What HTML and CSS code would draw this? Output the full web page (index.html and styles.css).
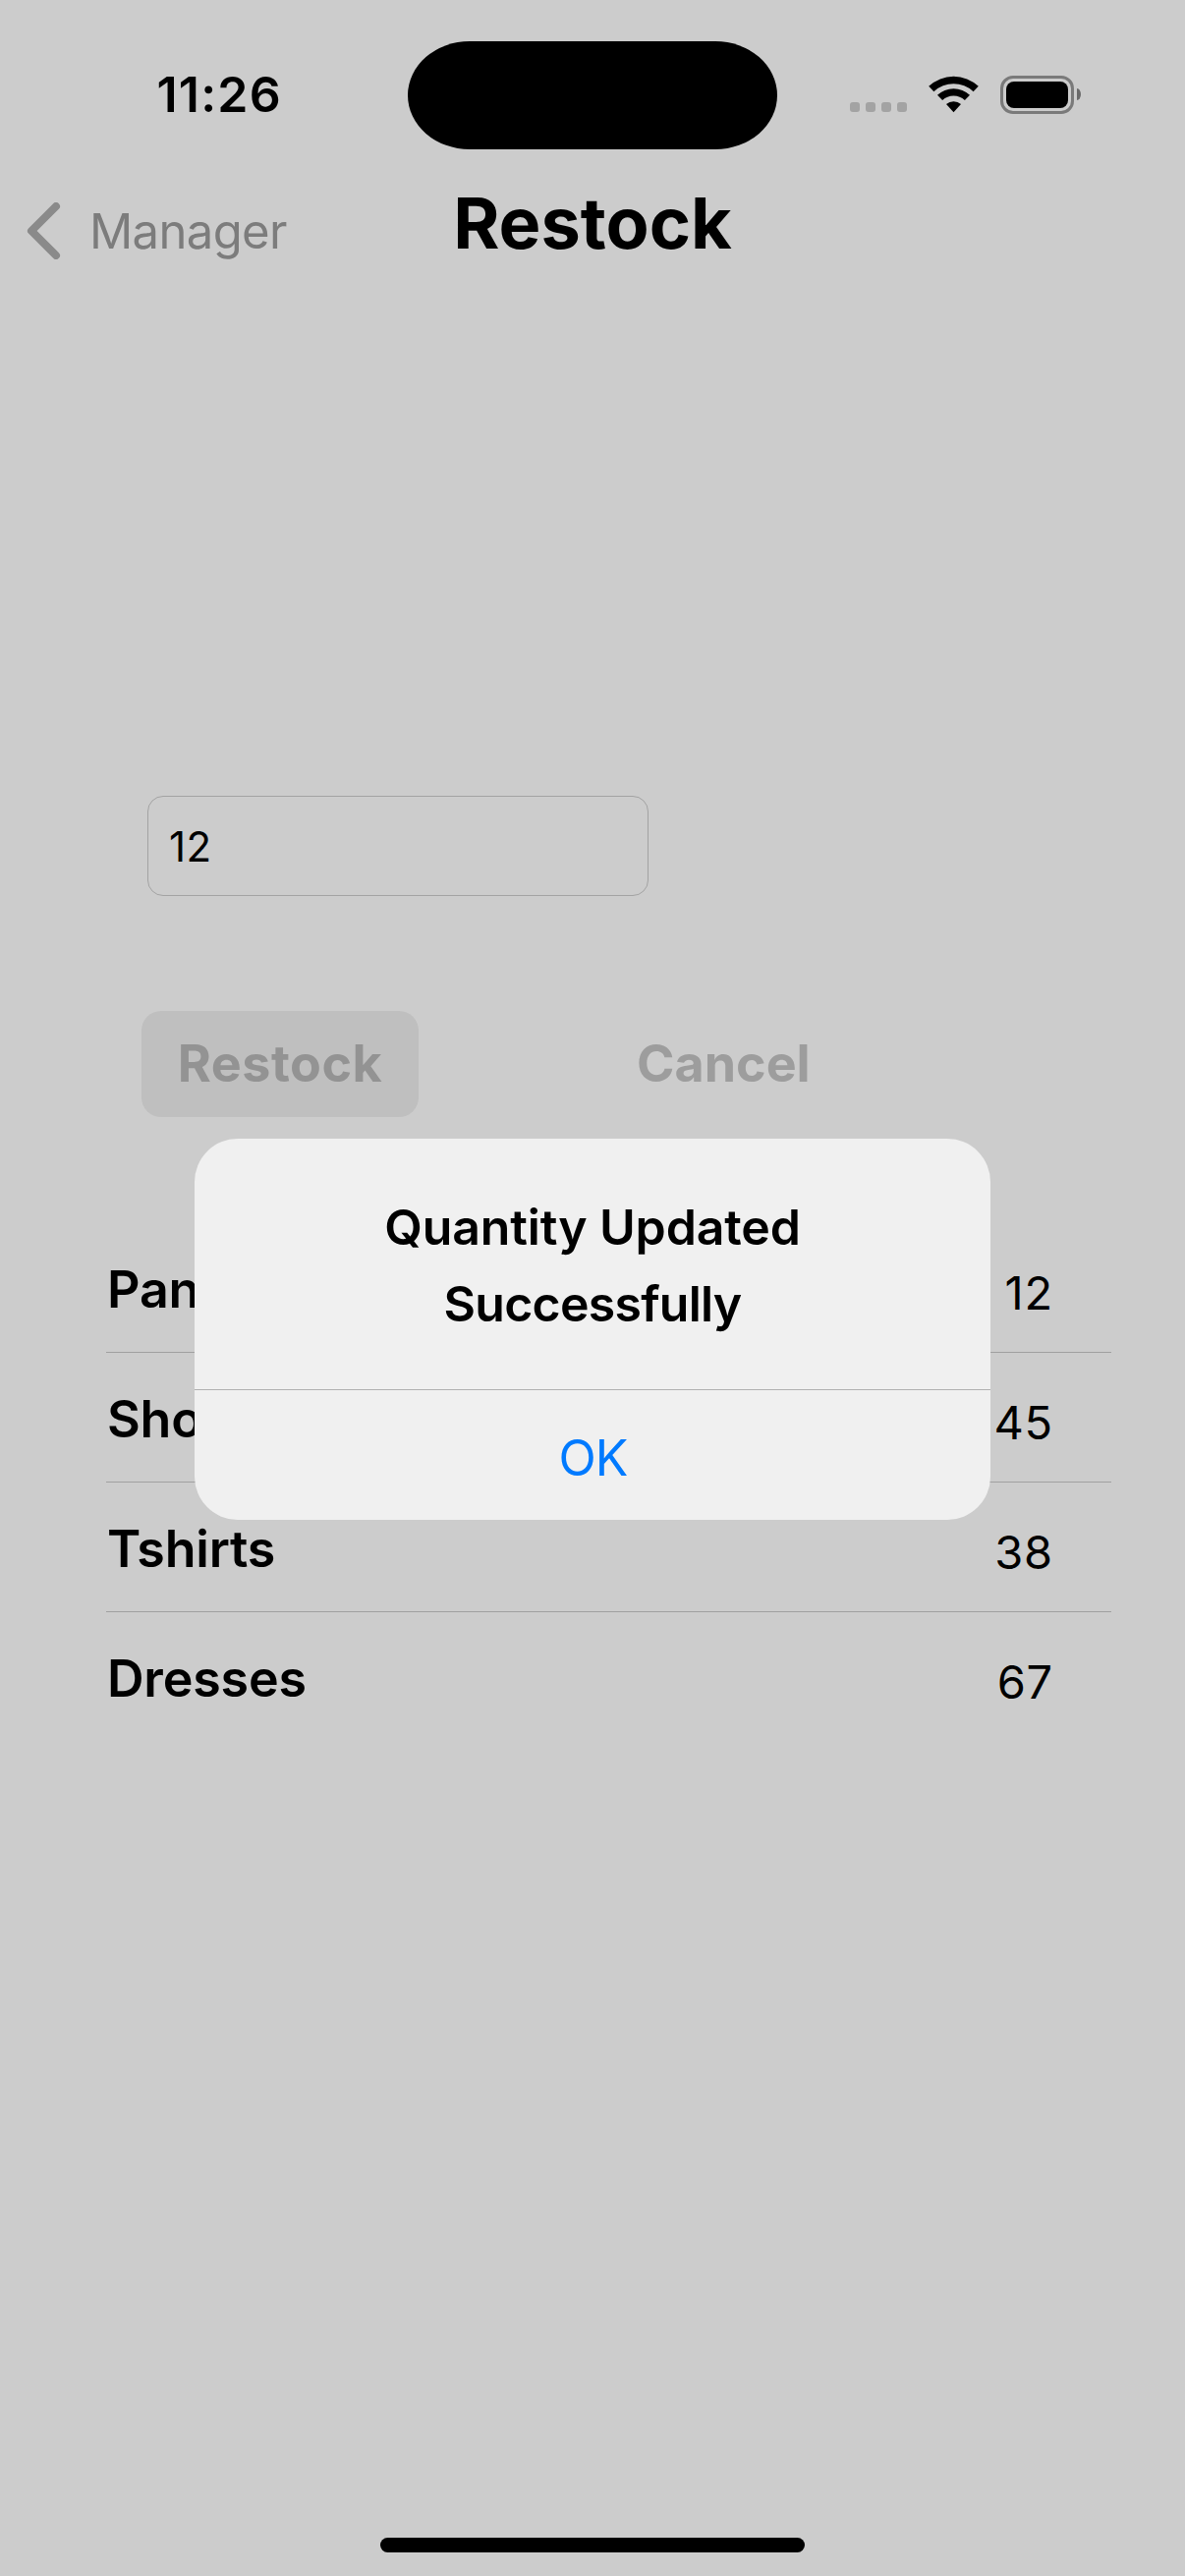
FILE: index.html
```html
<!DOCTYPE html>
<html lang="en">
<head>
<meta charset="utf-8">
<title>Restock</title>
<link rel="stylesheet" href="styles.css">
</head>
<body>
<div class="screen">
  <header class="status">
    <span class="status-time">11:26</span>
    <span class="island"></span>
    <div class="status-icons">
      <div class="signal"><i></i><i></i><i></i><i></i></div>
      <svg class="wifi" width="51" height="38" viewBox="0 0 51 38">
        <path d="M0.2 10.8 A37 37 0 0 1 50.8 10.8 L45.6 16.2 A29.5 29.5 0 0 0 5.4 16.2 Z"/>
        <path d="M9 19.8 A24 24 0 0 1 42 19.8 L36.9 25.1 A16.6 16.6 0 0 0 14.1 25.1 Z"/>
        <path d="M18 29 A11.6 11.6 0 0 1 33 29 L25.5 37.3 Z"/>
      </svg>
      <div class="battery"><span class="battery-body"><span class="battery-fill"></span></span><span class="battery-tip"></span></div>
    </div>
  </header>

  <nav class="nav">
    <a class="back">
      <svg width="35" height="58" viewBox="0 0 35 58"><path d="M30 4 L5 29 L30 54"/></svg>
      <span class="back-label">Manager</span>
    </a>
    <h1 class="title">Restock</h1>
  </nav>

  <main class="content">
    <div class="field"><span class="field-text">12</span></div>
    <div class="actions">
      <button class="btn btn-fill"><span>Restock</span></button>
      <button class="btn btn-plain"><span>Cancel</span></button>
    </div>
    <ul class="list">
      <li class="row"><span class="name">Pants</span><span class="qty">12</span></li>
      <li class="row"><span class="name">Shoes</span><span class="qty">45</span></li>
      <li class="row"><span class="name">Tshirts</span><span class="qty">38</span></li>
      <li class="row"><span class="name">Dresses</span><span class="qty">67</span></li>
    </ul>
  </main>
  <div class="home"></div>

  <div class="alert" role="alertdialog">
    <p class="alert-text">Quantity Updated<br><span class="alert-tight">Successfully</span></p>
    <button class="alert-ok"><span>OK</span></button>
  </div>
</div>
</body>
</html>
```
FILE: styles.css
```css
* { box-sizing: border-box; }
body { margin: 0; font-family: Inter, "Liberation Sans", sans-serif; color: #000; background: #ccc; }
.screen { position: relative; width: 1206px; height: 2622px; display: flex; flex-direction: column; background: #ccc; overflow: hidden; }
.status { height: 192px; display: grid; grid-template-columns: 415px 376px 1fr; align-items: center; }
.status-time { padding-left: 159.5px; font-size: 50px; font-weight: 600; line-height: 60px; letter-spacing: 1.2px; }
.island { height: 110px; margin-top: 1px; border-radius: 63px / 55px; background: #000; }
.status-icons { display: flex; align-items: center; padding-left: 74px; }
.signal { display: flex; gap: 6px; margin-right: 22px; padding-top: 26px; }
.signal i { width: 10px; height: 10px; border-radius: 3px; background: #a3a3a3; }
.wifi { display: block; margin-right: 22px; }
.battery { display: flex; align-items: center; gap: 3px; }
.battery-body { width: 75px; height: 39px; padding: 3px; border: 3px solid #7a7a7a; border-radius: 13px; }
.battery-fill { display: block; height: 27px; border-radius: 8px; background: #000; }
.battery-tip { width: 4px; height: 12px; border-radius: 0 4px 4px 0 / 0 6px 6px 0; background: #6a6a6a; }
.nav { height: 86px; display: grid; grid-template-columns: 1fr auto 1fr; align-items: start; }
.back { display: flex; align-items: center; height: 86px; padding-left: 27px; }
.back svg { fill: none; stroke: #8a8a8a; stroke-width: 8; stroke-linecap: round; stroke-linejoin: round; }
.back-label { margin-left: 29px; font-size: 49px; letter-spacing: -0.65px; color: #7c7c7c; }
.title { margin: 0; font-size: 72px; font-weight: 700; line-height: 69px; }
.content { padding: 532px 75px 0 108px; }
.field { display: flex; align-items: center; width: 510px; height: 102px; margin-left: 42px; padding-left: 21px; border: 1px solid #a3a3a3; border-radius: 16px; font-size: 42px; letter-spacing: 0.5px; }
.actions { display: flex; margin: 117px 0 0 36px; height: 108px; }
.btn { border: 0; padding: 0; background: none; font: 700 52px/108px Inter, "Liberation Sans", sans-serif; text-align: center; }
.btn-fill { width: 282px; border-radius: 20px; background: #bfbfbf; color: #939393; letter-spacing: 0.5px; }
.btn-plain { margin-left: 222px; color: #9d9d9d; }
.list { list-style: none; margin: 108px 0 0; padding: 0; }
.row { display: flex; justify-content: space-between; height: 132px; padding: 0 59px 0 1px; border-bottom: 1px solid #a0a0a0; }
.row:last-child { border-bottom: 0; }
.name { font-size: 52px; font-weight: 600; line-height: 135px; letter-spacing: -0.2px; }
.qty { font-size: 47px; line-height: 142px; letter-spacing: 0.8px; }
.home { width: 432px; height: 15px; margin: auto auto 24px; border-radius: 8px; background: #000; }
.alert { position: absolute; left: 198px; top: 1159px; width: 810px; height: 388px; border-radius: 44px; background: #f0f0f0; }
.alert-text { height: 255px; margin: 0; padding-top: 51px; font-size: 50px; font-weight: 600; line-height: 78px; letter-spacing: -0.15px; text-align: center; }
.alert-tight { letter-spacing: -0.75px; }
.alert-ok { display: block; width: 100%; height: 133px; padding: 5px 0 0 1px; border: 0; border-top: 1px solid #b0b0b0; background: none; font: 400 50px Inter, "Liberation Sans", sans-serif; letter-spacing: -1px; color: #007aff; }
```
